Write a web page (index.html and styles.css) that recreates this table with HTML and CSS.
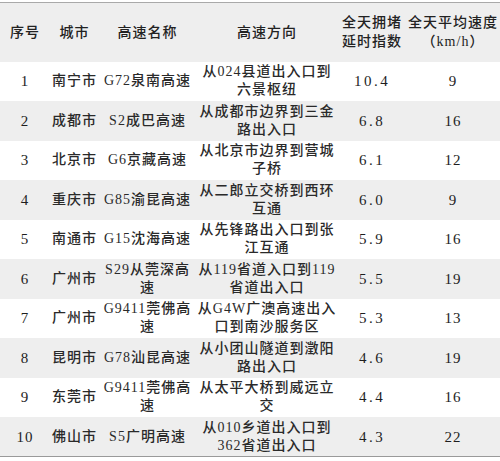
FILE: index.html
```html
<!DOCTYPE html>
<html lang="zh-CN">
<head>
<meta charset="utf-8">
<title>高速拥堵排名</title>
<link rel="stylesheet" href="styles.css">
</head>
<body>
<table class="tbl">
  <colgroup>
    <col class="c1"><col class="c2"><col class="c3"><col class="c4"><col class="c5"><col class="c6">
  </colgroup>
  <thead>
    <tr class="head">
      <th class="num-h">序号</th>
      <th>城市</th>
      <th>高速名称</th>
      <th>高速方向</th>
      <th>全天拥堵<br>延时指数</th>
      <th>全天平均速度<br>（km/h）</th>
    </tr>
  </thead>
  <tbody>
    <tr><td class="n">1</td><td>南宁市</td><td>G72泉南高速</td><td>从024县道出入口到<br>六景枢纽</td><td class="n d">10.4</td><td class="n">9</td></tr>
    <tr><td class="n">2</td><td>成都市</td><td>S2成巴高速</td><td>从成都市边界到三金<br>路出入口</td><td class="n d">6.8</td><td class="n">16</td></tr>
    <tr><td class="n">3</td><td>北京市</td><td>G6京藏高速</td><td>从北京市边界到营城<br>子桥</td><td class="n d">6.1</td><td class="n">12</td></tr>
    <tr><td class="n">4</td><td>重庆市</td><td>G85渝昆高速</td><td>从二郎立交桥到西环<br>互通</td><td class="n d">6.0</td><td class="n">9</td></tr>
    <tr><td class="n">5</td><td>南通市</td><td>G15沈海高速</td><td>从先锋路出入口到张<br>江互通</td><td class="n d">5.9</td><td class="n">16</td></tr>
    <tr><td class="n">6</td><td>广州市</td><td>S29从莞深高<br>速</td><td>从119省道入口到119<br>省道出入口</td><td class="n d">5.5</td><td class="n">19</td></tr>
    <tr><td class="n">7</td><td>广州市</td><td>G9411莞佛高<br>速</td><td>从G4W广澳高速出入<br>口到南沙服务区</td><td class="n d">5.3</td><td class="n">13</td></tr>
    <tr><td class="n">8</td><td>昆明市</td><td>G78汕昆高速</td><td>从小团山隧道到澂阳<br>路出入口</td><td class="n d">4.6</td><td class="n">19</td></tr>
    <tr><td class="n">9</td><td>东莞市</td><td>G9411莞佛高<br>速</td><td>从太平大桥到威远立<br>交</td><td class="n d">4.4</td><td class="n">16</td></tr>
    <tr><td class="n">10</td><td>佛山市</td><td>S5广明高速</td><td>从010乡道出入口到<br>362省道出入口</td><td class="n d">4.3</td><td class="n">22</td></tr>
  </tbody>
</table>
</body>
</html>
```

FILE: styles.css
```css
html, body {
  margin: 0;
  padding: 0;
  background: #ffffff;
}
body {
  padding-top: 2px;
  font-family: "Liberation Serif", "Noto Sans CJK SC", serif;
  font-size: 14px;
  letter-spacing: 1px;
  color: #2a2a2a;
}
.tbl {
  width: 500px;
  table-layout: fixed;
  border-collapse: collapse;
  border-spacing: 0;
  border-top: 1px solid #a9a9a9;
  border-bottom: 1px solid #9a9a9a;
}
.c1 { width: 50px; }
.c2 { width: 49px; }
.c3 { width: 97px; }
.c4 { width: 142px; }
.c5 { width: 68px; }
.c6 { width: 94px; }
.tbl th,
.tbl td {
  padding: 0;
  text-align: center;
  vertical-align: middle;
  white-space: nowrap;
}
.tbl th {
  font-weight: 500;
  line-height: 19px;
  color: #222222;
}
.head {
  height: 59px;
  background: #eeeeee;
}
.num-h {
  color: #e08b3e;
}
.tbl td {
  font-weight: 500;
  line-height: 18px;
}
.tbl td.n {
  font-size: 15px;
  font-weight: 400;
  letter-spacing: 1px;
  color: #1e1e1e;
}
.tbl td.d {
  letter-spacing: 2.5px;
}
.tbl tbody tr {
  height: 39.5px;
  background: #ffffff;
}
.tbl tbody tr:nth-child(even) {
  background: #eeeeee;
}
```
